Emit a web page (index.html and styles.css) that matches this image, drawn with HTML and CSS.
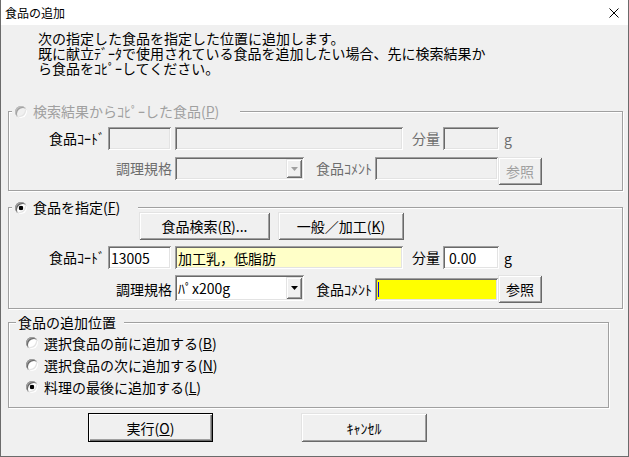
FILE: index.html
```html
<!DOCTYPE html>
<html lang="ja">
<head>
<meta charset="utf-8">
<title>食品の追加</title>
<link rel="stylesheet" href="styles.css">
</head>
<body>
<div class="window">
  <div class="titlebar">
    <span class="title">食品の追加</span>
    <svg class="close" width="10" height="10" viewBox="0 0 10 10"><path d="M0.5 0.5L9.5 9.5M9.5 0.5L0.5 9.5" stroke="#000" stroke-width="1" fill="none"/></svg>
  </div>
  <div class="client">
    <div class="message">
      <div>次の指定した食品を指定した位置に追加します。</div>
      <div>既に献立ﾃﾞｰﾀで使用されている食品を追加したい場合、先に検索結果か</div>
      <div>ら食品をｺﾋﾟｰしてください。</div>
    </div>

    <fieldset class="group g1">
      <legend><span class="radio off"></span><span class="ltext dis">検索結果からｺﾋﾟｰした食品(<u>P</u>)</span></legend>
      <div class="row r1">
        <span class="lab lab-code">食品ｺｰﾄﾞ</span>
        <span class="edit code"></span>
        <span class="edit name"></span>
        <span class="lab lab-qty gray">分量</span>
        <span class="edit qty"></span>
        <span class="unit gray">g</span>
      </div>
      <div class="row r2">
        <span class="lab lab-cook gray">調理規格</span>
        <span class="combo"><span class="combo-text"></span><span class="drop"><svg width="7" height="4" viewBox="0 0 7 4"><path d="M0 0H7L3.5 4Z" fill="#a0a0a0"/></svg></span></span>
        <span class="lab lab-comment gray">食品ｺﾒﾝﾄ</span>
        <span class="edit comment"></span>
        <span class="btn ref dis">参照</span>
      </div>
    </fieldset>

    <fieldset class="group g2">
      <legend><span class="radio on"></span><span class="ltext">食品を指定(<u>F</u>)</span></legend>
      <div class="row btnrow">
        <span class="btn search">食品検索(<u>R</u>)...</span>
        <span class="btn kind">一般／加工(<u>K</u>)</span>
      </div>
      <div class="row r1">
        <span class="lab lab-code">食品ｺｰﾄﾞ</span>
        <span class="edit code en">13005</span>
        <span class="edit name yl">加工乳，低脂肪</span>
        <span class="lab lab-qty">分量</span>
        <span class="edit qty en">0.00</span>
        <span class="unit">g</span>
      </div>
      <div class="row r2">
        <span class="lab lab-cook">調理規格</span>
        <span class="combo en"><span class="combo-text">ﾊﾟx200g</span><span class="drop"><svg width="7" height="4" viewBox="0 0 7 4"><path d="M0 0H7L3.5 4Z" fill="#000"/></svg></span></span>
        <span class="lab lab-comment">食品ｺﾒﾝﾄ</span>
        <span class="edit comment yel"><span class="caret"></span></span>
        <span class="btn ref">参照</span>
      </div>
    </fieldset>

    <fieldset class="group g3">
      <legend><span class="ltext">食品の追加位置</span></legend>
      <div class="opt"><span class="radio"></span><span>選択食品の前に追加する(<u>B</u>)</span></div>
      <div class="opt"><span class="radio"></span><span>選択食品の次に追加する(<u>N</u>)</span></div>
      <div class="opt"><span class="radio on"></span><span>料理の最後に追加する(<u>L</u>)</span></div>
    </fieldset>

    <div class="actions">
      <span class="btn big default">実行(<u>O</u>)</span>
      <span class="btn big">ｷｬﾝｾﾙ</span>
    </div>
  </div>
</div>
</body>
</html>
```

FILE: styles.css
```css
* { box-sizing: border-box; }
html, body { margin: 0; padding: 0; }
body {
  font-family: "Noto Sans CJK JP", "Noto Sans", sans-serif;
  font-size: 14px;
  color: #000;
  background: #f0f0f0;
}
.window {
  width: 629px;
  height: 457px;
  border: 1px solid #6b6b6b;
  border-top: none;
  background: #f0f0f0;
  display: flex;
  flex-direction: column;
}
.titlebar {
  height: 25px;
  flex: none;
  background: #fff;
  display: flex;
  align-items: center;
  justify-content: space-between;
  padding: 0 9px 0 4px;
}
.title { font-size: 12px; line-height: 25px; }
.close { display: block; }
.client {
  flex: 1;
  display: flex;
  flex-direction: column;
  align-items: flex-start;
}
.message {
  padding: 6px 0 0 37px;
  line-height: 15px;
  white-space: nowrap;
}

/* group boxes */
.group {
  margin: 0 0 0 7px;
  padding: 0;
  border: 1px solid #a0a0a0;
  box-shadow: inset 1px 1px #fff, 1px 1px #fff;
  min-width: 0;
}
.group legend {
  height: 11px;
  padding: 0;
  display: flex;
  align-items: center;
  background: #f0f0f0;
}
.ltext { line-height: 15px; white-space: nowrap; }
.dis { color: #a0a0a0; }
.gray { color: #6d6d6d; }

.g1 { width: 615px; margin-top: 30px; padding: 10px 0 5px; }
.g1 legend { margin-left: 3px; padding-left: 3px; width: 228px; }
.g2 { width: 615px; margin-top: 11px; padding: 0 0 5px; }
.g2 legend { margin-left: 3px; padding-left: 3px; width: 126px; }
.g3 { width: 601px; margin-top: 8px; padding: 4px 0 9px; }
.g3 legend { margin-left: 7px; padding-left: 2px; width: 108px; }

.group legend .radio { margin-right: 6px; }

/* rows */
.row { display: flex; }
.r1 { align-items: center; height: 23px; }
.r2 { align-items: flex-start; margin-top: 7px; }
.g2 .btnrow { margin-top: -1px; }
.g2 .r1 { margin-top: 6px; }
.g2 .r2 { margin-top: 6px; }

.lab { flex: none; text-align: right; white-space: nowrap; line-height: 23px; height: 23px; }
.lab-code { width: 96px; }
.lab-qty { width: 40px; padding-right: 3px; }
.lab-cook { width: 163px; }
.lab-comment { width: 71px; padding-right: 3px; }
.unit { margin-left: 5px; }

.edit {
  flex: none;
  display: flex;
  align-items: center;
  height: 23px;
  padding: 0 3px;
  background: #f0f0f0;
  box-shadow: inset 1px 1px #a0a0a0, inset -1px -1px #fff, inset 2px 2px #696969, inset -2px -2px #e3e3e3;
  white-space: nowrap;
  overflow: hidden;
}
.edit.en { background: #fff; }
.edit.yl { background: #ffffc8; }
.edit.yel { background: #ffff00; }
.code { width: 63px; margin-left: 3px; }
.name { width: 228px; margin-left: 4px; }
.qty { width: 56px; }
.qty.en { padding-left: 6px; }
.comment { width: 123px; }
.g2 .r2 .lab,
.g2 .r2 .comment { margin-top: 3px; }
.caret { display: block; width: 1px; height: 15px; background: #0000ff; margin-left: 0; }

.combo {
  flex: none;
  display: flex;
  width: 129px;
  height: 23px;
  margin-left: 3px;
  padding: 2px;
  background: #f0f0f0;
  box-shadow: inset 1px 1px #a0a0a0, inset -1px -1px #fff, inset 2px 2px #696969, inset -2px -2px #e3e3e3;
}
.combo.en { background: #fff; height: 26px; }
.combo-text { flex: 1; padding-left: 1px; line-height: 19px; white-space: nowrap; overflow: hidden; }
.combo.en .combo-text { line-height: 22px; }
.drop {
  flex: none;
  width: 16px;
  display: flex;
  align-items: center;
  justify-content: center;
  background: #f0f0f0;
  box-shadow: inset 1px 1px #e3e3e3, inset -1px -1px #696969, inset 2px 2px #fff, inset -2px -2px #a0a0a0;
}
.drop svg { display: block; }

/* buttons */
.btn {
  flex: none;
  display: flex;
  align-items: center;
  justify-content: center;
  height: 28px;
  background: #f0f0f0;
  box-shadow: inset 1px 1px #e3e3e3, inset -1px -1px #696969, inset 2px 2px #fff, inset -2px -2px #a0a0a0;
  white-space: nowrap;
}
.ref { width: 44px; }
.search { width: 131px; margin-left: 130px; }
.kind { width: 126px; margin-left: 8px; }

/* options */
.opt { display: flex; align-items: center; height: 22px; padding-left: 17px; white-space: nowrap; }
.opt .radio { margin-right: 6px; }

.radio {
  flex: none;
  display: block;
  width: 12px;
  height: 12px;
  border-radius: 50%;
  background: #fff;
  box-shadow: inset 1px 1px #a0a0a0, inset -1px -1px #fff, inset 2px 2px #696969, inset -2px -2px #e3e3e3;
}
.radio.off {
  background: #f0f0f0;
  box-shadow: inset 1px 1px #c0c0c0, inset -1px -1px #fff, inset 2px 2px #a0a0a0, inset -2px -2px #e3e3e3;
}
.radio.on { background: radial-gradient(circle at 50% 50%, #000 0, #000 2px, #fff 2.6px); }

.actions { display: flex; margin-top: 5px; padding-left: 87px; gap: 88px; }
.big { height: 29px; width: 125px; }
.big + .big { width: 126px; }
.default {
  box-shadow: inset 0 0 0 1px #000, inset 2px 2px #fff, inset -2px -2px #696969, inset -3px -3px #a0a0a0;
}
```
